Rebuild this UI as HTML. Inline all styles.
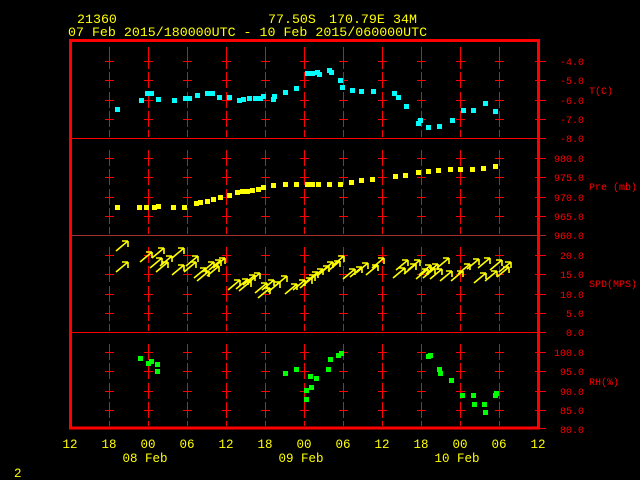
<!DOCTYPE html>
<html><head><meta charset="utf-8"><style>
html,body{margin:0;padding:0;background:#000;width:640px;height:480px;overflow:hidden}
svg{display:block}
text{font-family:"Liberation Mono",monospace}
</style></head><body>
<svg width="640" height="480" viewBox="0 0 640 480" xmlns="http://www.w3.org/2000/svg">
<defs>
<g id="col" stroke="#ff0000" stroke-width="1" fill="none" shape-rendering="crispEdges">
<path d="M0.5,47V54 M0.5,53V69 M-4,61.5H5 M0.5,72V88 M-4,80.5H5 M0.5,92V108 M-4,100.5H5 M0.5,111V127 M-4,119.5H5 M0.5,130V137
M0.5,150V166 M-4,158.5H5 M0.5,169V185 M-4,177.5H5 M0.5,189V205 M-4,197.5H5 M0.5,208V224 M-4,216.5H5 M0.5,227V234
M0.5,247V263 M-4,255.5H5 M0.5,266V282 M-4,274.5H5 M0.5,286V302 M-4,294.5H5 M0.5,305V321 M-4,313.5H5 M0.5,324V331
M0.5,344V360 M-4,352.5H5 M0.5,363V379 M-4,371.5H5 M0.5,383V399 M-4,391.5H5 M0.5,402V418 M-4,410.5H5 M0.5,421V426"/>
</g>
<g id="ar" stroke="#ffff00" stroke-width="1.6" fill="none"><path d="M0,0L12,-10 M12,-10H6 M12,-10V-4"/></g>
<rect id="c" width="5" height="5" fill="#00ffff"/>
<rect id="y" width="5" height="5" fill="#ffff00"/>
<rect id="g" width="5" height="5" fill="#00ff00"/>
</defs>

<use href="#col" x="109"/><use href="#col" x="148"/><use href="#col" x="187"/><use href="#col" x="226"/>
<use href="#col" x="265"/><use href="#col" x="304"/><use href="#col" x="343"/><use href="#col" x="382"/>
<use href="#col" x="421"/><use href="#col" x="460"/><use href="#col" x="499"/>

<g stroke="#ff0000" stroke-width="1" shape-rendering="crispEdges">
<path d="M70,138.5H546 M70,332.5H546"/>
<path d="M70,235.5H546" stroke="#a03030"/>
<path d="M535,61.5H546 M535,80.5H546 M535,100.5H546 M535,119.5H546
M535,158.5H546 M535,177.5H546 M535,197.5H546 M535,216.5H546
M535,255.5H546 M535,274.5H546 M535,294.5H546 M535,313.5H546
M535,352.5H546 M535,371.5H546 M535,391.5H546 M535,410.5H546 M535,428.5H546"/>
</g>
<rect x="70.5" y="40.5" width="468" height="387.5" fill="none" stroke="#ff0000" stroke-width="3" shape-rendering="crispEdges"/>

<g fill="#ffff00" font-size="13.3">
<text x="77" y="23">21360</text>
<text x="268" y="23">77.50S</text>
<text x="329" y="23">170.79E</text>
<text x="393" y="23">34M</text>
<text x="68" y="36">07 Feb 2015/180000UTC - 10 Feb 2015/060000UTC</text>
</g>

<g fill="#ff0000" font-size="10" text-anchor="end">
<text x="584" y="65">-4.0</text><text x="584" y="84">-5.0</text><text x="584" y="104">-6.0</text><text x="584" y="123">-7.0</text><text x="584" y="142">-8.0</text>
<text x="584" y="162">980.0</text><text x="584" y="181">975.0</text><text x="584" y="201">970.0</text><text x="584" y="220">965.0</text><text x="584" y="239">960.0</text>
<text x="584" y="259">20.0</text><text x="584" y="278">15.0</text><text x="584" y="298">10.0</text><text x="584" y="317">5.0</text><text x="584" y="336">0.0</text>
<text x="584" y="356">100.0</text><text x="584" y="375">95.0</text><text x="584" y="395">90.0</text><text x="584" y="414">85.0</text><text x="584" y="433">80.0</text>
</g>
<g fill="#ff0000" font-size="10">
<text x="589" y="94">T(C)</text>
<text x="589" y="190">Pre (mb)</text>
<text x="589" y="287">SPD(MPS)</text>
<text x="589" y="385">RH(%)</text>
</g>

<g fill="#ffff00" font-size="12.5" text-anchor="middle">
<text x="70" y="448">12</text><text x="109" y="448">18</text><text x="148" y="448">00</text><text x="187" y="448">06</text>
<text x="226" y="448">12</text><text x="265" y="448">18</text><text x="304" y="448">00</text><text x="343" y="448">06</text>
<text x="382" y="448">12</text><text x="421" y="448">18</text><text x="460" y="448">00</text><text x="499" y="448">06</text>
<text x="538" y="448">12</text>
<text x="145" y="462">08 Feb</text><text x="301" y="462">09 Feb</text><text x="457" y="462">10 Feb</text>
</g>
<text x="14" y="477" fill="#ffff00" font-size="12.5">2</text>

<g>
<use href="#c" x="115" y="107"/><use href="#c" x="139" y="98"/><use href="#c" x="145" y="91"/><use href="#c" x="149" y="91"/><use href="#c" x="156" y="97"/>
<use href="#c" x="172" y="98"/><use href="#c" x="183" y="96"/><use href="#c" x="187" y="96"/><use href="#c" x="195" y="93"/><use href="#c" x="205" y="91"/><use href="#c" x="210" y="91"/>
<use href="#c" x="217" y="95"/><use href="#c" x="227" y="95"/><use href="#c" x="237" y="98"/><use href="#c" x="241" y="97"/><use href="#c" x="247" y="96"/><use href="#c" x="253" y="96"/>
<use href="#c" x="258" y="96"/><use href="#c" x="261" y="94"/><use href="#c" x="271" y="97"/><use href="#c" x="272" y="94"/><use href="#c" x="283" y="90"/><use href="#c" x="294" y="86"/>
<use href="#c" x="305" y="71"/><use href="#c" x="310" y="71"/><use href="#c" x="315" y="70"/><use href="#c" x="317" y="72"/><use href="#c" x="327" y="68"/><use href="#c" x="329" y="70"/>
<use href="#c" x="338" y="78"/><use href="#c" x="340" y="85"/><use href="#c" x="350" y="88"/><use href="#c" x="359" y="89"/><use href="#c" x="371" y="89"/>
<use href="#c" x="392" y="91"/><use href="#c" x="396" y="95"/><use href="#c" x="404" y="104"/><use href="#c" x="416" y="121"/><use href="#c" x="418" y="118"/>
<use href="#c" x="426" y="125"/><use href="#c" x="437" y="124"/><use href="#c" x="450" y="118"/><use href="#c" x="461" y="108"/><use href="#c" x="471" y="108"/><use href="#c" x="483" y="101"/><use href="#c" x="493" y="109"/>
</g>

<g>
<use href="#y" x="115" y="205"/><use href="#y" x="137" y="205"/><use href="#y" x="144" y="205"/><use href="#y" x="152" y="205"/><use href="#y" x="156" y="204"/>
<use href="#y" x="171" y="205"/><use href="#y" x="182" y="205"/><use href="#y" x="194" y="201"/><use href="#y" x="198" y="200"/><use href="#y" x="205" y="199"/><use href="#y" x="211" y="197"/>
<use href="#y" x="218" y="195"/><use href="#y" x="227" y="193"/><use href="#y" x="235" y="190"/><use href="#y" x="240" y="189"/><use href="#y" x="245" y="189"/><use href="#y" x="250" y="188"/>
<use href="#y" x="256" y="187"/><use href="#y" x="261" y="185"/><use href="#y" x="271" y="183"/><use href="#y" x="283" y="182"/><use href="#y" x="294" y="182"/>
<use href="#y" x="305" y="182"/><use href="#y" x="310" y="182"/><use href="#y" x="316" y="182"/><use href="#y" x="327" y="182"/><use href="#y" x="338" y="182"/>
<use href="#y" x="349" y="180"/><use href="#y" x="359" y="178"/><use href="#y" x="370" y="177"/><use href="#y" x="393" y="174"/><use href="#y" x="403" y="173"/>
<use href="#y" x="416" y="170"/><use href="#y" x="426" y="169"/><use href="#y" x="436" y="168"/><use href="#y" x="448" y="167"/><use href="#y" x="458" y="167"/>
<use href="#y" x="470" y="167"/><use href="#y" x="481" y="166"/><use href="#y" x="493" y="164"/>
</g>

<g>
<use href="#ar" x="116" y="251"/><use href="#ar" x="116" y="272"/><use href="#ar" x="140" y="262"/><use href="#ar" x="150" y="268"/><use href="#ar" x="152" y="258"/>
<use href="#ar" x="156" y="272"/><use href="#ar" x="160" y="266"/><use href="#ar" x="172" y="258"/><use href="#ar" x="172" y="275"/><use href="#ar" x="184" y="272"/>
<use href="#ar" x="186" y="266"/><use href="#ar" x="194" y="278"/><use href="#ar" x="197" y="281"/><use href="#ar" x="202" y="272"/><use href="#ar" x="207" y="276"/>
<use href="#ar" x="209" y="270"/><use href="#ar" x="213" y="268"/><use href="#ar" x="228" y="290"/><use href="#ar" x="236" y="289"/><use href="#ar" x="239" y="291"/>
<use href="#ar" x="243" y="285"/><use href="#ar" x="248" y="283"/><use href="#ar" x="255" y="293"/><use href="#ar" x="258" y="298"/><use href="#ar" x="262" y="290"/>
<use href="#ar" x="268" y="292"/><use href="#ar" x="275" y="286"/><use href="#ar" x="285" y="294"/><use href="#ar" x="293" y="290"/>
<use href="#ar" x="300" y="288"/><use href="#ar" x="303" y="285"/><use href="#ar" x="306" y="282"/><use href="#ar" x="311" y="279"/><use href="#ar" x="317" y="276"/>
<use href="#ar" x="321" y="272"/><use href="#ar" x="328" y="271"/><use href="#ar" x="332" y="266"/><use href="#ar" x="343" y="279"/><use href="#ar" x="350" y="277"/>
<use href="#ar" x="356" y="273"/><use href="#ar" x="366" y="275"/><use href="#ar" x="372" y="268"/><use href="#ar" x="393" y="278"/><use href="#ar" x="396" y="270"/>
<use href="#ar" x="404" y="274"/><use href="#ar" x="408" y="270"/><use href="#ar" x="416" y="279"/><use href="#ar" x="419" y="275"/><use href="#ar" x="423" y="278"/>
<use href="#ar" x="426" y="274"/><use href="#ar" x="430" y="279"/><use href="#ar" x="437" y="268"/><use href="#ar" x="440" y="281"/><use href="#ar" x="451" y="281"/>
<use href="#ar" x="458" y="274"/><use href="#ar" x="467" y="269"/><use href="#ar" x="474" y="283"/><use href="#ar" x="478" y="268"/><use href="#ar" x="485" y="281"/>
<use href="#ar" x="490" y="270"/><use href="#ar" x="497" y="277"/><use href="#ar" x="499" y="272"/>
</g>

<g>
<use href="#g" x="138" y="356"/><use href="#g" x="146" y="361"/><use href="#g" x="149" y="359"/><use href="#g" x="155" y="362"/><use href="#g" x="155" y="369"/>
<use href="#g" x="283" y="371"/><use href="#g" x="294" y="367"/><use href="#g" x="304" y="388"/><use href="#g" x="304" y="397"/><use href="#g" x="308" y="374"/>
<use href="#g" x="309" y="385"/><use href="#g" x="314" y="376"/><use href="#g" x="326" y="367"/><use href="#g" x="328" y="357"/><use href="#g" x="336" y="353"/><use href="#g" x="339" y="351"/>
<use href="#g" x="426" y="354"/><use href="#g" x="428" y="353"/><use href="#g" x="437" y="367"/><use href="#g" x="438" y="371"/><use href="#g" x="449" y="378"/>
<use href="#g" x="460" y="393"/><use href="#g" x="471" y="393"/><use href="#g" x="472" y="402"/><use href="#g" x="482" y="402"/><use href="#g" x="483" y="410"/>
<use href="#g" x="493" y="393"/><use href="#g" x="494" y="391"/>
</g>
</svg>
</body></html>
